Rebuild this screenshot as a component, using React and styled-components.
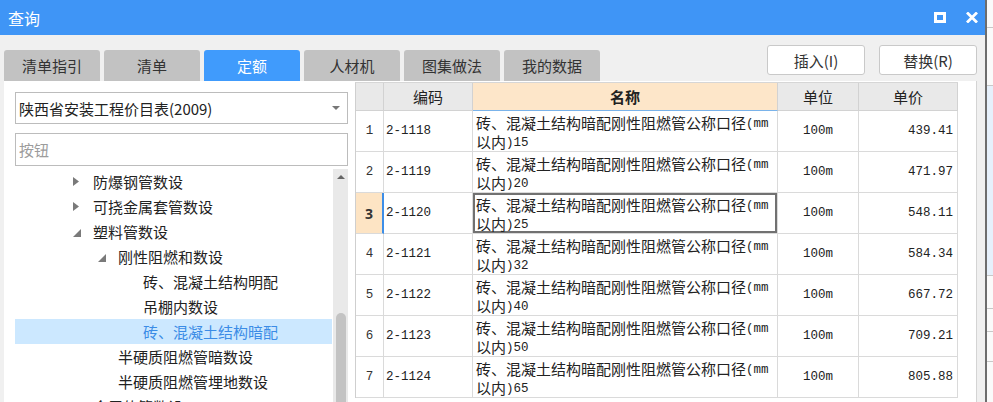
import React from 'react';
import styled, { createGlobalStyle } from 'styled-components';

const GlobalStyle = createGlobalStyle`
  html, body { margin: 0; padding: 0; }
  body {
    font-family: "Noto Sans CJK SC", "Noto Sans", sans-serif;
    background: #f6f6f6;
  }
  * { box-sizing: border-box; }
`;

const Screen = styled.div`
  width: 993px;
  height: 402px;
  display: flex;
  overflow: hidden;
`;

const Dialog = styled.div`
  width: 987px;
  height: 402px;
  flex: none;
  display: flex;
  flex-direction: column;
  background: #f0f0f0;
  border-right: 2px solid #6d6d6d;
`;

const Outside = styled.div`
  flex: 1;
  display: flex;
  flex-direction: column;
  background: #fafafa;
`;

const OutsideStrip = styled.div`
  height: ${p => p.$h}px;
  flex: none;
  background: ${p => p.$bg || '#fafafa'};
  border-bottom: 1px solid #c8c8c8;
`;

const TitleBar = styled.div`
  height: 35px;
  flex: none;
  background: #3f95f6;
  display: flex;
  align-items: center;
  padding: 0 7px 0 8px;
  color: #fff;
`;

const Title = styled.div`
  flex: 1;
  font-size: 16px;
  line-height: 1;
`;

const WinButtons = styled.div`
  display: flex;
  align-items: center;
  gap: 20px;
`;

const TopRow = styled.div`
  height: 46px;
  flex: none;
  display: flex;
  padding: 0 8px 0 4px;
`;

const Tabs = styled.div`
  display: flex;
  gap: 4px;
  align-self: flex-end;
`;

const Tab = styled.div`
  width: 96px;
  height: 31px;
  border-radius: 3px 3px 0 0;
  background: ${p => (p.$active ? '#409bfc' : '#c2c2c2')};
  color: ${p => (p.$active ? '#fff' : '#333')};
  font-size: 15px;
  display: flex;
  align-items: center;
  justify-content: center;
`;

const Spacer = styled.div`
  flex: 1;
`;

const Buttons = styled.div`
  display: flex;
  gap: 14px;
  margin-top: 10px;
  align-self: flex-start;
`;

const Button = styled.div`
  width: 98px;
  height: 30px;
  background: #fff;
  border: 1px solid #c9c9c9;
  border-radius: 3px;
  font-size: 15px;
  color: #333;
  display: flex;
  align-items: center;
  justify-content: center;
`;

const Content = styled.div`
  flex: 1;
  min-height: 0;
  display: flex;
  margin: 0 8px 0 4px;
  background: #fff;
  border-right: 1px solid #d4d4d4;
  overflow: hidden;
`;

const LeftPanel = styled.div`
  width: 351px;
  flex: none;
  display: flex;
  flex-direction: column;
  padding: 11px 7px 0 11px;
`;

const Combo = styled.div`
  height: 32px;
  flex: none;
  border: 1px solid #bcbcbc;
  display: flex;
  align-items: center;
  padding-left: 3px;
  font-size: 15px;
  color: #222;
`;

const ComboText = styled.span`
  flex: 1;
`;

const Caret = styled.span`
  width: 0;
  height: 0;
  margin-right: 7px;
  border-left: 4px solid transparent;
  border-right: 4px solid transparent;
  border-top: 4px solid #777;
`;

const Search = styled.input`
  height: 33px;
  flex: none;
  margin-top: 9px;
  border: 1px solid #bcbcbc;
  padding: 0 0 0 3px;
  font-family: "Noto Sans CJK SC", sans-serif;
  font-size: 15px;
  color: #222;
  outline: none;
  &::placeholder { color: #9c9c9c; }
`;

const TreeArea = styled.div`
  flex: 1;
  min-height: 0;
  margin-top: 3px;
  display: flex;
  gap: 1px;
  overflow: hidden;
`;

const TreeList = styled.div`
  width: 317px;
  flex: none;
  display: flex;
  flex-direction: column;
`;

const TreeRow = styled.div`
  height: 25px;
  flex: none;
  display: flex;
  align-items: center;
  padding-left: ${p => 58 + (p.$level - 1) * 25}px;
  background: ${p => (p.$selected ? '#cce8ff' : 'transparent')};
  color: ${p => (p.$selected ? '#3b8ce6' : '#222')};
  font-size: 15px;
  white-space: nowrap;
`;

const ArrowSlot = styled.span`
  width: 20px;
  flex: none;
  display: flex;
  align-items: center;
`;

const Scrollbar = styled.div`
  width: 15px;
  flex: none;
  background: #e9e9e9;
  display: flex;
  flex-direction: column;
  align-items: center;
`;

const UpArrow = styled.span`
  margin-top: 6px;
  width: 0;
  height: 0;
  border-left: 4px solid transparent;
  border-right: 4px solid transparent;
  border-bottom: 4px solid #666;
`;

const Thumb = styled.div`
  margin-top: 134px;
  flex: 1;
  width: 10px;
  border-radius: 5px 5px 0 0;
  background: #c3c3c3;
`;

const TablePane = styled.div`
  flex: 1;
  padding-top: 1px;
  display: flex;
  flex-direction: column;
`;

const Grid = styled.div`
  width: 603px;
  display: grid;
  grid-template-columns: 28px 89px 305px 81px 99px;
  grid-template-rows: 28px;
  grid-auto-rows: 41px;
  border-left: 1px solid #cfcfcf;
  border-top: 1px solid #d6d6d6;
`;

const HeadCell = styled.div`
  background: ${p => (p.$active ? '#fde6c9' : '#e9e9e9')};
  border-right: 1px solid #d2d2d2;
  border-bottom: 1px solid ${p => (p.$active ? '#7ab3ea' : '#d2d2d2')};
  font-size: 15px;
  font-weight: ${p => (p.$active ? 700 : 400)};
  color: #222;
  display: flex;
  align-items: center;
  justify-content: center;
`;

const Cell = styled.div`
  border-right: 1px solid #dadada;
  border-bottom: 1px solid #dadada;
  background: #fff;
  display: flex;
  align-items: center;
  color: #222;
  font-family: "Liberation Mono", "Noto Sans CJK SC", monospace;
  font-size: 12.5px;
`;

const RowNum = styled(Cell)`
  justify-content: center;
  background: ${p => (p.$active ? '#fde4c4' : '#fff')};
  border-right-color: ${p => (p.$active ? '#3d8ee8' : '#dadada')};
  border-right-width: ${p => (p.$active ? 2 : 1)}px;
  font-family: ${p => (p.$active ? '"Noto Sans", sans-serif' : '"Liberation Mono", monospace')};
  font-weight: ${p => (p.$active ? 700 : 400)};
  font-size: ${p => (p.$active ? 14 : 12.5)}px;
  color: #333;
`;

const CodeCell = styled(Cell)`
  padding-left: 2px;
`;

const NameCell = styled(Cell)`
  flex-direction: column;
  align-items: flex-start;
  padding: 3px 3px 0;
  font-family: "Noto Sans CJK SC", sans-serif;
  font-size: 15px;
  line-height: 18px;
  box-shadow: ${p => (p.$active ? 'inset 0 0 0 2px #717171' : 'none')};
  white-space: nowrap;
`;

const NameLine = styled.span`
  display: block;
`;

const Latin = styled.span`
  font-family: "Liberation Mono", monospace;
  font-size: 12.5px;
  vertical-align: 2px;
`;

const UnitCell = styled(Cell)`
  justify-content: center;
`;

const PriceCell = styled(Cell)`
  justify-content: flex-end;
  padding-right: 4px;
`;

function Mixed({ text }) {
  const parts = text.split(/([\x20-\x7e]+)/).filter(Boolean);
  return parts.map((p, i) =>
    /^[\x20-\x7e]+$/.test(p) ? <Latin key={i}>{p}</Latin> : <React.Fragment key={i}>{p}</React.Fragment>
  );
}

function CollapsedArrow() {
  return (
    <svg width="6" height="9" viewBox="0 0 6 9">
      <path d="M0 0 L6 4.5 L0 9 Z" fill="#7a7a7a" />
    </svg>
  );
}

function ExpandedArrow() {
  return (
    <svg width="8" height="8" viewBox="0 0 8 8" style={{ marginTop: 2 }}>
      <path d="M8 0 L8 8 L0 8 Z" fill="#7a7a7a" />
    </svg>
  );
}

const tree = [
  { level: 1, arrow: 'c', text: '防爆钢管数设' },
  { level: 1, arrow: 'c', text: '可挠金属套管数设' },
  { level: 1, arrow: 'e', text: '塑料管数设' },
  { level: 2, arrow: 'e', text: '刚性阻燃和数设' },
  { level: 3, text: '砖、混凝土结构明配' },
  { level: 3, text: '吊棚内数设' },
  { level: 3, text: '砖、混凝土结构暗配', selected: true },
  { level: 2, text: '半硬质阻燃管暗数设' },
  { level: 2, text: '半硬质阻燃管埋地数设' },
  { level: 1, arrow: 'c', text: '金属软管数设' },
];

const rows = [
  ['2-1118', '15', '439.41'],
  ['2-1119', '20', '471.97'],
  ['2-1120', '25', '548.11'],
  ['2-1121', '32', '584.34'],
  ['2-1122', '40', '667.72'],
  ['2-1123', '50', '709.21'],
  ['2-1124', '65', '805.88'],
];

const tabs = ['清单指引', '清单', '定额', '人材机', '图集做法', '我的数据'];

export default function App() {
  return (
    <>
      <GlobalStyle />
      <Screen>
        <Dialog>
          <TitleBar>
            <Title>查询</Title>
            <WinButtons>
              <svg width="12" height="11" viewBox="0 0 12 11">
                <rect x="1.5" y="1.5" width="9" height="8" fill="none" stroke="#fff" strokeWidth="3" />
              </svg>
              <svg width="12" height="11" viewBox="0 0 12 11">
                <path d="M1 0.5 L11 10.5 M11 0.5 L1 10.5" stroke="#fff" strokeWidth="2.8" />
              </svg>
            </WinButtons>
          </TitleBar>
          <TopRow>
            <Tabs>
              {tabs.map(t => (
                <Tab key={t} $active={t === '定额'}>{t}</Tab>
              ))}
            </Tabs>
            <Spacer />
            <Buttons>
              <Button>插入(I)</Button>
              <Button>替换(R)</Button>
            </Buttons>
          </TopRow>
          <Content>
            <LeftPanel>
              <Combo>
                <ComboText>陕西省安装工程价目表(2009)</ComboText>
                <Caret />
              </Combo>
              <Search placeholder="按钮" />
              <TreeArea>
                <TreeList>
                  {tree.map((n, i) => (
                    <TreeRow key={i} $level={n.level} $selected={n.selected}>
                      <ArrowSlot>
                        {n.arrow === 'c' && <CollapsedArrow />}
                        {n.arrow === 'e' && <ExpandedArrow />}
                      </ArrowSlot>
                      {n.text}
                    </TreeRow>
                  ))}
                </TreeList>
                <Scrollbar>
                  <UpArrow />
                  <Thumb />
                </Scrollbar>
              </TreeArea>
            </LeftPanel>
            <TablePane>
              <Grid>
                <HeadCell />
                <HeadCell>编码</HeadCell>
                <HeadCell $active>名称</HeadCell>
                <HeadCell>单位</HeadCell>
                <HeadCell>单价</HeadCell>
                {rows.map((r, i) => {
                  const active = i === 2;
                  return (
                    <React.Fragment key={r[0]}>
                      <RowNum $active={active}>{i + 1}</RowNum>
                      <CodeCell>{r[0]}</CodeCell>
                      <NameCell $active={active}>
                        <NameLine><Mixed text="砖、混凝土结构暗配刚性阻燃管公称口径(mm" /></NameLine>
                        <NameLine><Mixed text={`以内)${r[1]}`} /></NameLine>
                      </NameCell>
                      <UnitCell>100m</UnitCell>
                      <PriceCell>{r[2]}</PriceCell>
                    </React.Fragment>
                  );
                })}
              </Grid>
            </TablePane>
          </Content>
        </Dialog>
        <Outside>
          <OutsideStrip $h={28} />
          <OutsideStrip $h={58} />
          <OutsideStrip $h={190} $bg="#e6f0fb" />
          <OutsideStrip $h={33} />
          <OutsideStrip $h={23} />
          <OutsideStrip $h={30} />
        </Outside>
      </Screen>
    </>
  );
}
